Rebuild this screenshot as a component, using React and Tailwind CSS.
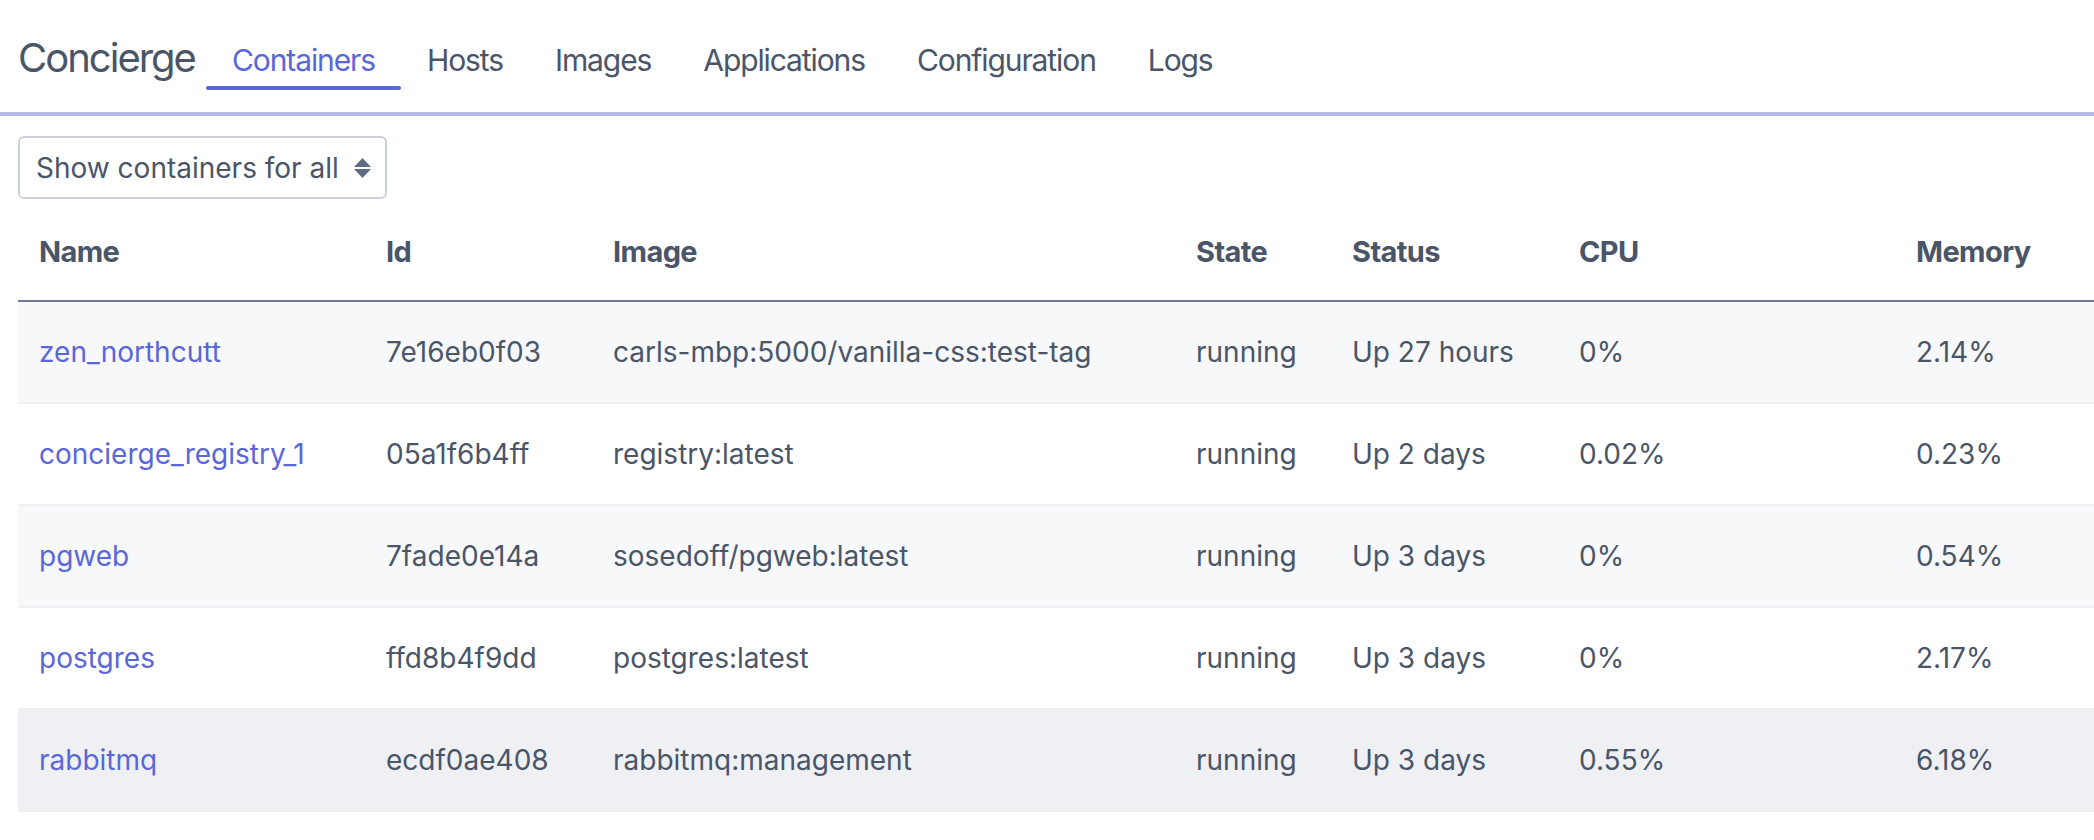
const tabs = ["Containers", "Hosts", "Images", "Applications", "Configuration", "Logs"];

const columns = ["Name", "Id", "Image", "State", "Status", "CPU", "Memory"];

const containers = [
  { name: "zen_northcutt", id: "7e16eb0f03", image: "carls-mbp:5000/vanilla-css:test-tag", state: "running", status: "Up 27 hours", cpu: "0%", memory: "2.14%" },
  { name: "concierge_registry_1", id: "05a1f6b4ff", image: "registry:latest", state: "running", status: "Up 2 days", cpu: "0.02%", memory: "0.23%" },
  { name: "pgweb", id: "7fade0e14a", image: "sosedoff/pgweb:latest", state: "running", status: "Up 3 days", cpu: "0%", memory: "0.54%" },
  { name: "postgres", id: "ffd8b4f9dd", image: "postgres:latest", state: "running", status: "Up 3 days", cpu: "0%", memory: "2.17%" },
  { name: "rabbitmq", id: "ecdf0ae408", image: "rabbitmq:management", state: "running", status: "Up 3 days", cpu: "0.55%", memory: "6.18%" },
];

const rowBg = ["bg-[#f7f8fa]", "bg-white", "bg-[#f7f8fa]", "bg-white", "bg-[#eff0f4]"];

const gridCols = "grid grid-cols-[347px_227px_583px_156px_227px_337px_1fr]";

function SortArrows() {
  return (
    <svg width="17" height="20" viewBox="0 0 17 20" aria-hidden="true">
      <polygon points="8.5,0 17,9 0,9" fill="#5f6b85" />
      <polygon points="0,11 17,11 8.5,20" fill="#5f6b85" />
    </svg>
  );
}

function Nav() {
  return (
    <header className="flex h-[116px] items-start border-b-4 border-[#b2b9e5] px-[18px]">
      <h1 className="mt-[38px] text-[40px] leading-none tracking-[-2px] text-[#4a5568]">Concierge</h1>
      <nav className="ml-[11px] mt-[45px] flex">
        {tabs.map((tab, i) => (
          <a key={tab} href="#" className="flex flex-col items-stretch">
            <span
              className={`px-[26px] text-[30px] leading-none tracking-[-1.1px] ${
                i === 0 ? "text-[#5a67d8]" : "text-[#4a5568]"
              }`}
            >
              {tab}
            </span>
            <span
              className={`mt-[11px] h-[4px] rounded-full ${i === 0 ? "bg-[#5a67d8]" : "bg-transparent"}`}
            />
          </a>
        ))}
      </nav>
    </header>
  );
}

export default function App() {
  return (
    <div className="min-h-screen overflow-hidden bg-white font-['Inter','Liberation_Sans',sans-serif] text-[#4a5568]">
      <Nav />
      <main className="pl-[18px]">
        <div className="mt-[20px] flex h-[63px] w-[369px] items-center justify-between rounded-[6px] border-2 border-[#cdd1db] pl-[16px] pr-[14px]">
          <span className="text-[28px] leading-none">Show containers for all</span>
          <SortArrows />
        </div>

        <div className="mt-[3px]">
          <div className={`${gridCols} h-[100px] items-center border-b-2 border-[#707b93]`}>
            {columns.map((col) => (
              <div key={col} className="pl-[21px] text-[29px] font-bold leading-none tracking-[-0.6px]">
                {col}
              </div>
            ))}
          </div>
          {containers.map((c, i) => (
            <div
              key={c.id}
              className={`${gridCols} h-[102px] items-center border-b-2 border-[#eff0f4] text-[28px] leading-none ${rowBg[i]}`}
            >
              <a href="#" className="pl-[21px] text-[#5a67d8]">
                {c.name}
              </a>
              <div className="pl-[21px]">{c.id}</div>
              <div className="pl-[21px]">{c.image}</div>
              <div className="pl-[21px]">{c.state}</div>
              <div className="pl-[21px]">{c.status}</div>
              <div className="pl-[21px]">{c.cpu}</div>
              <div className="pl-[21px]">{c.memory}</div>
            </div>
          ))}
        </div>
      </main>
    </div>
  );
}
